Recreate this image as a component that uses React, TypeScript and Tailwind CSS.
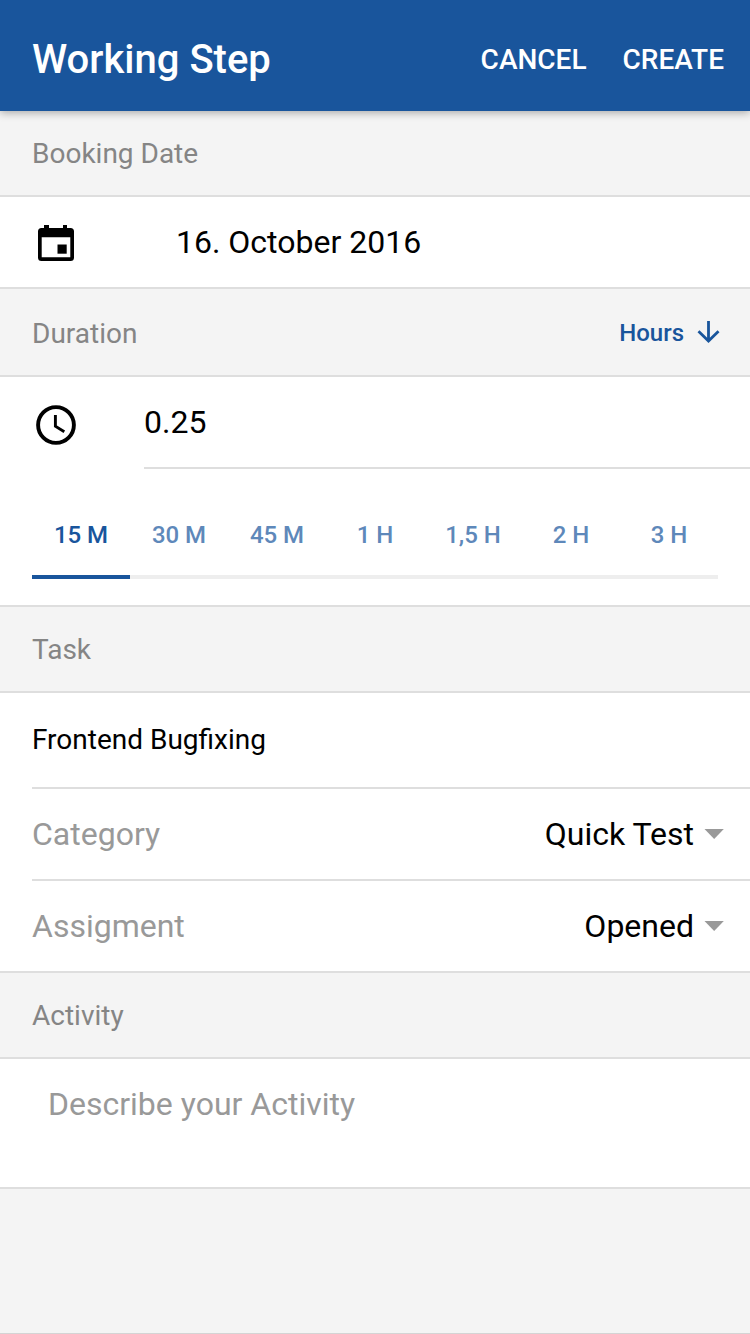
import type { ReactNode } from 'react';

const durations = ['15 M', '30 M', '45 M', '1 H', '1,5 H', '2 H', '3 H'];

function CalendarIcon() {
  return (
    <svg width="40" height="40" viewBox="0 0 40 40" className="mt-[2px] shrink-0">
      <path
        fillRule="evenodd"
        d="M8 2h5v3h14V2h4v3h3.500a3.500 3.500 0 0 1 3.500 3.500v26a3.500 3.500 0 0 1-3.500 3.500h-29a3.500 3.500 0 0 1-3.500-3.500v-26A3.500 3.500 0 0 1 5.500 5H8V2ZM5.700 14.300v20h28.600v-20H5.700Z"
      />
      <path d="M21.500 21.500h9.200v9.200h-9.200z" />
    </svg>
  );
}

function ClockIcon() {
  return (
    <svg width="40" height="40" viewBox="0 0 40 40" fill="none" stroke="#000" className="shrink-0">
      <circle cx="20" cy="20" r="17.900" strokeWidth="3.900" />
      <path d="M19.400 10v11.300L28.300 26.700" strokeWidth="2.900" />
    </svg>
  );
}

function ArrowDownIcon() {
  return (
    <svg width="24" height="24" viewBox="0 0 24 24" fill="none" stroke="#19559c" strokeWidth="2.800" className="mb-[2px]">
      <path d="M12.500 1v20M2.500 11.300l10 9.800 10-9.800" />
    </svg>
  );
}

function Caret() {
  return (
    <svg width="20" height="10" viewBox="0 0 20 10" fill="#999">
      <path d="M.5 0h19.300L10.200 10z" />
    </svg>
  );
}

function SectionHeader({ title, className, children }: { title: string; className: string; children?: ReactNode }) {
  return (
    <div className={`flex items-center justify-between border-b-2 border-[#dedede] bg-[#f4f4f4] pl-8 text-[28px] text-[#858585] ${className}`}>
      <h2>{title}</h2>
      {children}
    </div>
  );
}

function SelectRow({ label, value, className }: { label: string; value: string; className: string }) {
  return (
    <div className={`flex h-[92px] items-center justify-between border-b-2 border-[#dedede] pr-[26px] text-[32px] ${className}`}>
      <span className="text-[#999]">{label}</span>
      <button className="flex items-center gap-[10px]">
        {value}
        <Caret />
      </button>
    </div>
  );
}

export default function App() {
  return (
    <div className="flex h-[1334px] w-[750px] flex-col overflow-hidden bg-white font-['Roboto',sans-serif] leading-none text-black">
      <header className="relative z-10 flex h-[111px] shrink-0 items-center justify-between bg-[#19559c] pt-2 pr-[26px] pl-8 text-white shadow-[0_2px_8px_rgba(0,0,0,0.3)]">
        <h1 className="text-[40px] font-medium">Working Step</h1>
        <div className="flex gap-9 text-[28px] font-medium">
          <button>CANCEL</button>
          <button>CREATE</button>
        </div>
      </header>

      <SectionHeader title="Booking Date" className="h-[86px] pt-[2px]" />
      <div className="flex h-[92px] items-center border-b-2 border-[#dedede] pl-9 text-[32px]">
        <CalendarIcon />
        <span className="ml-[100px]">16. October 2016</span>
      </div>

      <SectionHeader title="Duration" className="h-[88px] pt-1">
        <button className="flex items-center gap-3 pr-[30px] pb-[2px] text-[24px] font-medium text-[#19559c]">
          Hours
          <ArrowDownIcon />
        </button>
      </SectionHeader>
      <div className="h-[230px] border-b-2 border-[#dedede]">
        <div className="flex h-[92px] pl-9 text-[32px]">
          <div className="pt-7">
            <ClockIcon />
          </div>
          <div className="ml-[68px] flex flex-1 items-center border-b-2 border-[#dedede]">0.25</div>
        </div>
        <div className="mt-[22px] ml-8 grid h-[88px] w-[686px] grid-cols-7 text-[24px] font-medium">
          {durations.map((duration, i) => (
            <button
              key={duration}
              className={
                i === 0
                  ? 'border-b-4 border-[#19559c] pt-1 text-[#19559c]'
                  : 'border-b-4 border-[#eee] pt-1 text-[#5e88ba]'
              }
            >
              {duration}
            </button>
          ))}
        </div>
      </div>

      <SectionHeader title="Task" className="h-[86px] pt-[2px]" />
      <div className="ml-8 flex h-[96px] items-center border-b-2 border-[#dedede] text-[28px]">Frontend Bugfixing</div>
      <SelectRow label="Category" value="Quick Test" className="ml-8" />
      <SelectRow label="Assigment" value="Opened" className="pl-8" />

      <SectionHeader title="Activity" className="h-[86px] pt-[2px]" />
      <div className="h-[130px] border-b-2 border-[#dedede] pt-[29px] pl-12 text-[32px] text-[#999]">
        Describe your Activity
      </div>
      <div className="flex-1 border-b border-[#d4d4d4] bg-[#f4f4f4]" />
    </div>
  );
}
